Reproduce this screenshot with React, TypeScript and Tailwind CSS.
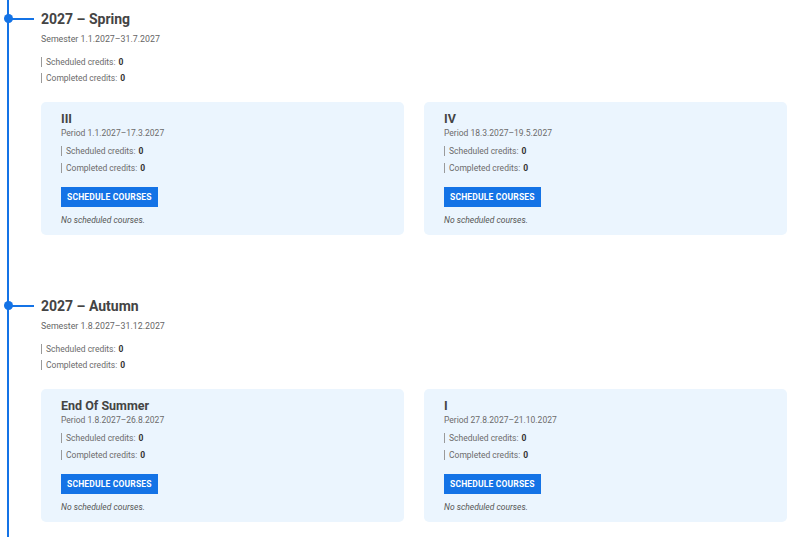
import React from "react";

interface Period {
    name: string;
    range: string;
}

interface Semester {
    title: string;
    range: string;
    periods: Period[];
}

const semesters: Semester[] = [
    {
        title: "2027 – Spring",
        range: "1.1.2027–31.7.2027",
        periods: [
            { name: "III", range: "1.1.2027–17.3.2027" },
            { name: "IV", range: "18.3.2027–19.5.2027" },
        ],
    },
    {
        title: "2027 – Autumn",
        range: "1.8.2027–31.12.2027",
        periods: [
            { name: "End Of Summer", range: "1.8.2027–26.8.2027" },
            { name: "I", range: "27.8.2027–21.10.2027" },
        ],
    },
];

function Credits({ label }: { label: string }) {
    return (
        <div className="flex items-center h-[16px] text-[8.5px] text-[#6b6b6b]">
            <span className="w-px h-[10px] bg-[#9a9a9a] mr-[4px]"></span>
            {label}: <span className="ml-[3px] font-bold text-[#333]">0</span>
        </div>
    );
}

function PeriodCard({ period }: { period: Period }) {
    return (
        <div className="flex-1 rounded-[5px] bg-[#ebf5fe] pl-[20px] pt-[9px] pb-[7px]">
            <h3 className="text-[12.5px] leading-[16px] font-bold text-[#444]">{period.name}</h3>
            <div className="h-[12px] text-[8.5px] leading-[12px] text-[#6b6b6b]">Period {period.range}</div>
            <div className="mt-[4px]">
                <Credits label="Scheduled credits" />
                <div className="mt-[1px]">
                    <Credits label="Completed credits" />
                </div>
            </div>
            <button className="mt-[11px] h-[20px] px-[6px] bg-[#1473e6] text-white text-[8.5px] font-bold tracking-[0.02em] uppercase">
                Schedule courses
            </button>
            <div className="mt-[5px] h-[16px] leading-[16px] text-[8.5px] italic text-[#555]">No scheduled courses.</div>
        </div>
    );
}

export default function App() {
    return (
        <div
            className="relative min-h-[537px] bg-white pl-[41px] pr-[13px] overflow-hidden"
            style={{ fontFamily: 'Roboto, "Noto Sans", sans-serif' }}
        >
            {/* Timeline rail */}
            <div className="absolute left-[7px] top-0 bottom-0 w-[2px] bg-[#1473e6]"></div>

            <div className="flex flex-col gap-[62px] pt-[10px]">
                {semesters.map((s) => (
                    <section key={s.title} className="relative">
                        {/* Timeline marker */}
                        <div className="absolute left-[-37px] top-[4px] w-[9px] h-[9px] rounded-full bg-[#1473e6]"></div>
                        <div className="absolute left-[-33px] top-[8px] w-[26px] h-[2px] bg-[#1473e6]"></div>

                        <h2 className="text-[14px] leading-[18px] font-bold text-[#444]">{s.title}</h2>
                        <div className="mt-[4px] h-[14px] text-[8.8px] leading-[14px] text-[#666]">Semester {s.range}</div>
                        <div className="mt-[8px]">
                            <Credits label="Scheduled credits" />
                            <Credits label="Completed credits" />
                        </div>
                        <div className="mt-[16px] flex gap-[20px]">
                            {s.periods.map((p) => (
                                <PeriodCard key={p.name} period={p} />
                            ))}
                        </div>
                    </section>
                ))}
            </div>
        </div>
    );
}
